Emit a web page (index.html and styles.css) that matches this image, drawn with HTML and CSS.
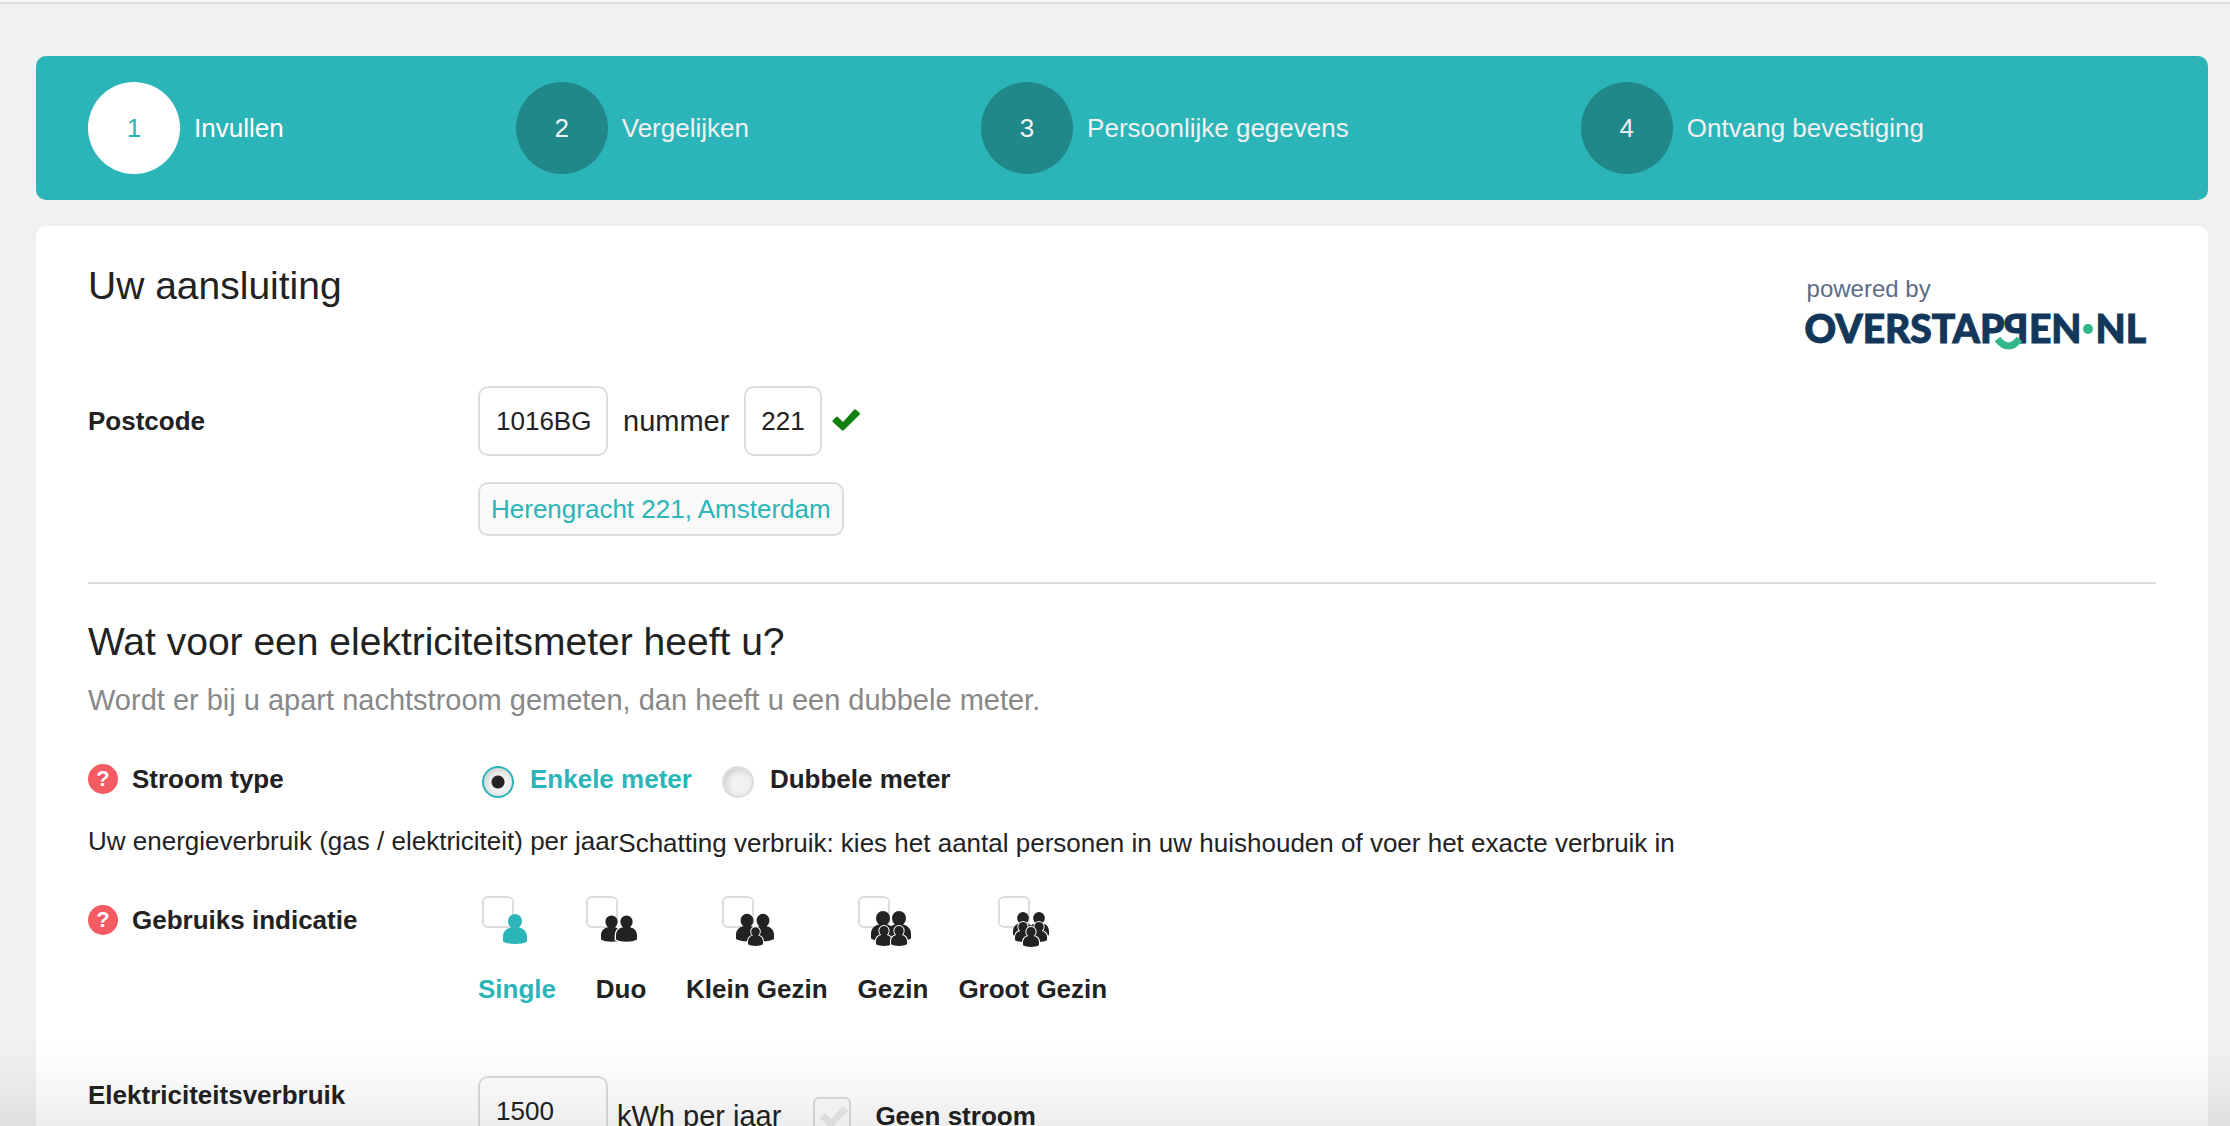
FILE: index.html
```html
<!DOCTYPE html>
<html lang="nl">
<head>
<meta charset="utf-8">
<meta name="viewport" content="width=device-width, initial-scale=1">
<title>Energie vergelijken</title>
<link rel="stylesheet" href="styles.css">
</head>
<body>
<svg class="sprite" aria-hidden="true">
  <symbol id="person" viewBox="0 0 24 30" overflow="visible">
    <path d="M12 0a7 7 0 0 1 7 7c0 3-1.300 5-3 6.500C21 14.500 24 18 24 23v4.500C21 29.300 17 30 12 30S3 29.300 0 27.500V23c0-5 3-8.500 8-9.500C6.300 12 5 10 5 7a7 7 0 0 1 7-7z"/>
  </symbol>
  <symbol id="check" viewBox="0 0 28 22">
    <path d="M1 11l3-3q1-.8 2 0l5 5L22 .8q1-.9 2 0l3.500 3q1 1 0 2L12 21q-1.300 1.200-2.500 0L.800 13q-.8-1 .2-2z"/>
  </symbol>
</svg>
<div class="page">
  <ol class="steps">
    <li class="step step-active"><span class="step-number">1</span><span>Invullen</span></li>
    <li class="step"><span class="step-number">2</span><span>Vergelijken</span></li>
    <li class="step"><span class="step-number">3</span><span>Persoonlijke gegevens</span></li>
    <li class="step"><span class="step-number">4</span><span>Ontvang bevestiging</span></li>
  </ol>
  <form class="card">
    <section class="section connection">
      <header class="section-head">
        <h2>Uw aansluiting</h2>
        <a class="logo" href="#">
          <span class="logo-by">powered by</span>
          <span class="logo-name">OVERSTAP<span class="logo-flip">P<svg class="logo-smile" viewBox="0 0 28 14"><path d="M3 2q11 14 22 0" /></svg></span>EN<span class="logo-dot"></span>NL</span>
        </a>
      </header>
      <div class="row">
        <label class="row-label row-label-field" for="postcode">Postcode</label>
        <div class="stack">
          <div class="inline">
            <input class="field field-postcode" id="postcode" type="text" value="1016BG">
            <label class="unit" for="nummer">nummer</label>
            <input class="field field-number" id="nummer" type="text" value="221">
            <svg class="valid"><use href="#check"/></svg>
          </div>
          <output class="address">Herengracht 221, Amsterdam</output>
        </div>
      </div>
    </section>
    <section class="section meter">
      <h2>Wat voor een elektriciteitsmeter heeft u?</h2>
      <p class="hint">Wordt er bij u apart nachtstroom gemeten, dan heeft u een dubbele meter.</p>
      <div class="row row-meter">
        <div class="row-label"><button class="help" type="button">?</button>Stroom type</div>
        <div class="radios">
          <label class="radio"><input type="radio" name="meter" checked><span>Enkele meter</span></label>
          <label class="radio"><input type="radio" name="meter"><span>Dubbele meter</span></label>
        </div>
      </div>
      <p class="usage"><span>Uw energieverbruik (gas / elektriciteit) per jaar</span><span class="usage-note">Schatting verbruik: kies het aantal personen in uw huishouden of voer het exacte verbruik in</span></p>
      <div class="row row-household">
        <div class="row-label"><button class="help" type="button">?</button>Gebruiks indicatie</div>
        <div class="households">
          <label class="household household-active">
            <span class="pick"><input type="checkbox"><svg class="people" viewBox="0 0 40 38"><use href="#person" x="8" y="4" width="24" height="30"/></svg></span>
            <span>Single</span>
          </label>
          <label class="household">
            <span class="pick"><input type="checkbox"><svg class="people" viewBox="0 0 40 38"><use href="#person" x="2" y="5" width="21" height="27"/><use class="front" href="#person" x="17" y="5" width="21" height="27"/></svg></span>
            <span>Duo</span>
          </label>
          <label class="household">
            <span class="pick"><input type="checkbox"><svg class="people" viewBox="0 0 40 38"><use href="#person" x="1" y="3" width="22" height="29"/><use href="#person" x="17" y="3" width="22" height="29"/><use class="front" href="#person" x="13" y="17" width="15" height="19"/></svg></span>
            <span>Klein Gezin</span>
          </label>
          <label class="household">
            <span class="pick"><input type="checkbox"><svg class="people" viewBox="0 0 40 38"><use href="#person" x="0" y="1" width="24" height="30"/><use href="#person" x="16" y="1" width="24" height="30"/><use class="front" href="#person" x="5" y="16" width="16" height="20"/><use class="front" href="#person" x="20" y="16" width="16" height="20"/></svg></span>
            <span>Gezin</span>
          </label>
          <label class="household">
            <span class="pick"><input type="checkbox"><svg class="people" viewBox="0 0 40 38"><use href="#person" x="2" y="2" width="20" height="25"/><use href="#person" x="18" y="2" width="20" height="25"/><use class="front" href="#person" x="4" y="12" width="16" height="20"/><use class="front" href="#person" x="20" y="12" width="16" height="20"/><use class="front" href="#person" x="12" y="17" width="16" height="20"/></svg></span>
            <span>Groot Gezin</span>
          </label>
        </div>
      </div>
      <div class="row row-power">
        <label class="row-label" for="stroom">Elektriciteitsverbruik</label>
        <div class="power">
          <input class="field field-postcode" id="stroom" type="text" value="1500">
          <label class="unit" for="stroom">kWh per jaar</label>
          <label class="none"><span class="tick"><input type="checkbox"><svg><use href="#check"/></svg></span>Geen stroom</label>
        </div>
      </div>
    </section>
  </form>
</div>
</body>
</html>
```

FILE: styles.css
```css
* { box-sizing: border-box; }

body {
  margin: 0;
  background: #f1f1f1;
  color: #222;
  font: 26px/30px "Liberation Sans", Arial, sans-serif;
}

.page {
  height: 100vh;
  overflow: hidden;
  padding: 56px 22px 0 36px;
  background: linear-gradient(#f8f8f8 2px, #dcdcdc 2px 4px, #f1f1f1 4px);
}

/* shade along the bottom edge of the window */
.page::after {
  content: "";
  position: fixed;
  inset: auto 0 0;
  height: 86px;
  background: linear-gradient(rgba(0, 0, 0, 0), rgba(0, 0, 0, .03) 55%, rgba(0, 0, 0, .07));
  pointer-events: none;
}

.sprite { position: absolute; width: 0; height: 0; }

h2, p { margin: 0; font-weight: 400; }
h2 { font-size: 39px; line-height: 44px; }

.steps {
  display: flex;
  margin: 0 0 26px;
  padding: 26px 52px;
  list-style: none;
  background: #2bb5b8;
  border-radius: 10px;
  color: #f1f1f1;
}
.step { display: flex; flex: 1 1 auto; align-items: center; gap: 14px; }
.step-number {
  display: grid;
  place-items: center;
  width: 92px;
  height: 92px;
  border-radius: 50%;
  background: #208888;
}
.step-active { color: #fff; }
.step-active .step-number { background: #fff; color: #2bb5b8; }

.card { padding: 0 52px 52px; background: #fff; border-radius: 10px; }
.section { padding-top: 38px; }
.meter { padding-top: 36px; }
.connection { padding-bottom: 46px; border-bottom: 2px solid #ddd; }

.section-head { display: flex; justify-content: space-between; height: 122px; }
.logo {
  display: flex;
  flex-direction: column;
  margin-right: 10px;
  padding-top: 8px;
  color: #5d6c86;
  text-decoration: none;
  font-size: 24px;
  line-height: 34px;
}
.logo-by { padding-left: 2px; }
.logo-name {
  color: #12375a;
  font: 900 39px/44px Lato, sans-serif;
  -webkit-text-stroke: 1px #12375a;
}
.logo-flip { display: inline-block; position: relative; transform: scaleX(-1); }
.logo-smile {
  position: absolute;
  left: 6px;
  top: 31px;
  width: 28px;
  height: 14px;
  overflow: visible;
  fill: none;
  stroke: #2fb98a;
  stroke-width: 7px;
}
.logo-dot {
  display: inline-block;
  width: 10px;
  height: 10px;
  margin: 0 2px 9px;
  border-radius: 50%;
  background: #2fb98a;
}

.row { display: flex; align-items: flex-start; }
.row-label {
  display: flex;
  flex: 0 0 390px;
  align-items: center;
  gap: 14px;
  font-weight: 700;
}
.row-label-field { height: 70px; }
.stack { display: flex; flex-direction: column; align-items: flex-start; gap: 26px; }
.inline { display: flex; align-items: center; }
.unit { font-size: 29px; }
.inline .unit { padding: 0 15px; }

.field {
  height: 70px;
  padding: 0 16px;
  border: 2px solid #ddd;
  border-radius: 10px;
  background: #fff;
  color: #222;
  font: inherit;
}
.field-postcode { width: 130px; }
.field-number { width: 78px; padding: 0 15px; }
.valid { width: 28px; height: 22px; margin: 0 0 2px 10px; fill: #118011; }
.address {
  padding: 10px 11px;
  border: 2px solid #ddd;
  border-radius: 10px;
  background: #f9f9f9;
  color: #2bb5b8;
}

.hint { margin-top: 20px; color: #888; font-size: 29px; line-height: 32px; }
.row-meter { margin-top: 48px; }
.help {
  width: 30px;
  height: 30px;
  padding: 0;
  border: 0;
  border-radius: 50%;
  background: #f55b62;
  color: #fff;
  font: 700 22px/30px "Liberation Sans", Arial, sans-serif;
}
.radios { display: flex; gap: 30px; padding-left: 4px; }
.radio { display: flex; gap: 16px; font-weight: 700; }
.radio input {
  appearance: none;
  width: 32px;
  height: 32px;
  margin: 2px 0 0;
  border: 2px solid #ddd;
  border-radius: 50%;
  background: #f1f1f1;
  box-shadow: inset 2px 2px 6px #ccc;
}
.radio input:checked {
  border-color: #2bb5b8;
  background: radial-gradient(circle, #222 0 6px, #f1f1f1 7px);
}
.radio input:checked + span { color: #2bb5b8; }

.usage { display: flex; margin-top: 28px; }
.usage-note { padding-top: 2px; }

.row-household { margin-top: 38px; }
.row-household .row-label { padding-top: 9px; }
.households { display: flex; gap: 30px; }
.household { display: flex; flex-direction: column; align-items: center; gap: 28px; font-weight: 700; }
.household-active { color: #2bb5b8; }
.pick { position: relative; width: 70px; height: 50px; }
.pick input, .tick input {
  display: block;
  appearance: none;
  width: 32px;
  height: 32px;
  margin: 0;
  border: 2px solid #ddd;
  border-radius: 6px;
  background: #fff;
}
.people { position: absolute; left: 13px; top: 14px; width: 40px; height: 38px; fill: currentColor; }
.front { stroke: #fff; stroke-width: 3px; paint-order: stroke; }

.row-power { margin-top: 72px; }
.row-power .row-label { padding-top: 4px; }
.power { display: flex; align-items: center; }
.power .unit { padding: 10px 32px 0 9px; }
.none { display: flex; align-items: center; gap: 24px; padding-top: 10px; font-weight: 700; }
.tick { position: relative; }
.tick input { width: 38px; height: 38px; background: transparent; }
.tick svg { position: absolute; left: 7px; top: 9px; width: 28px; height: 22px; fill: #ececec; }
```
